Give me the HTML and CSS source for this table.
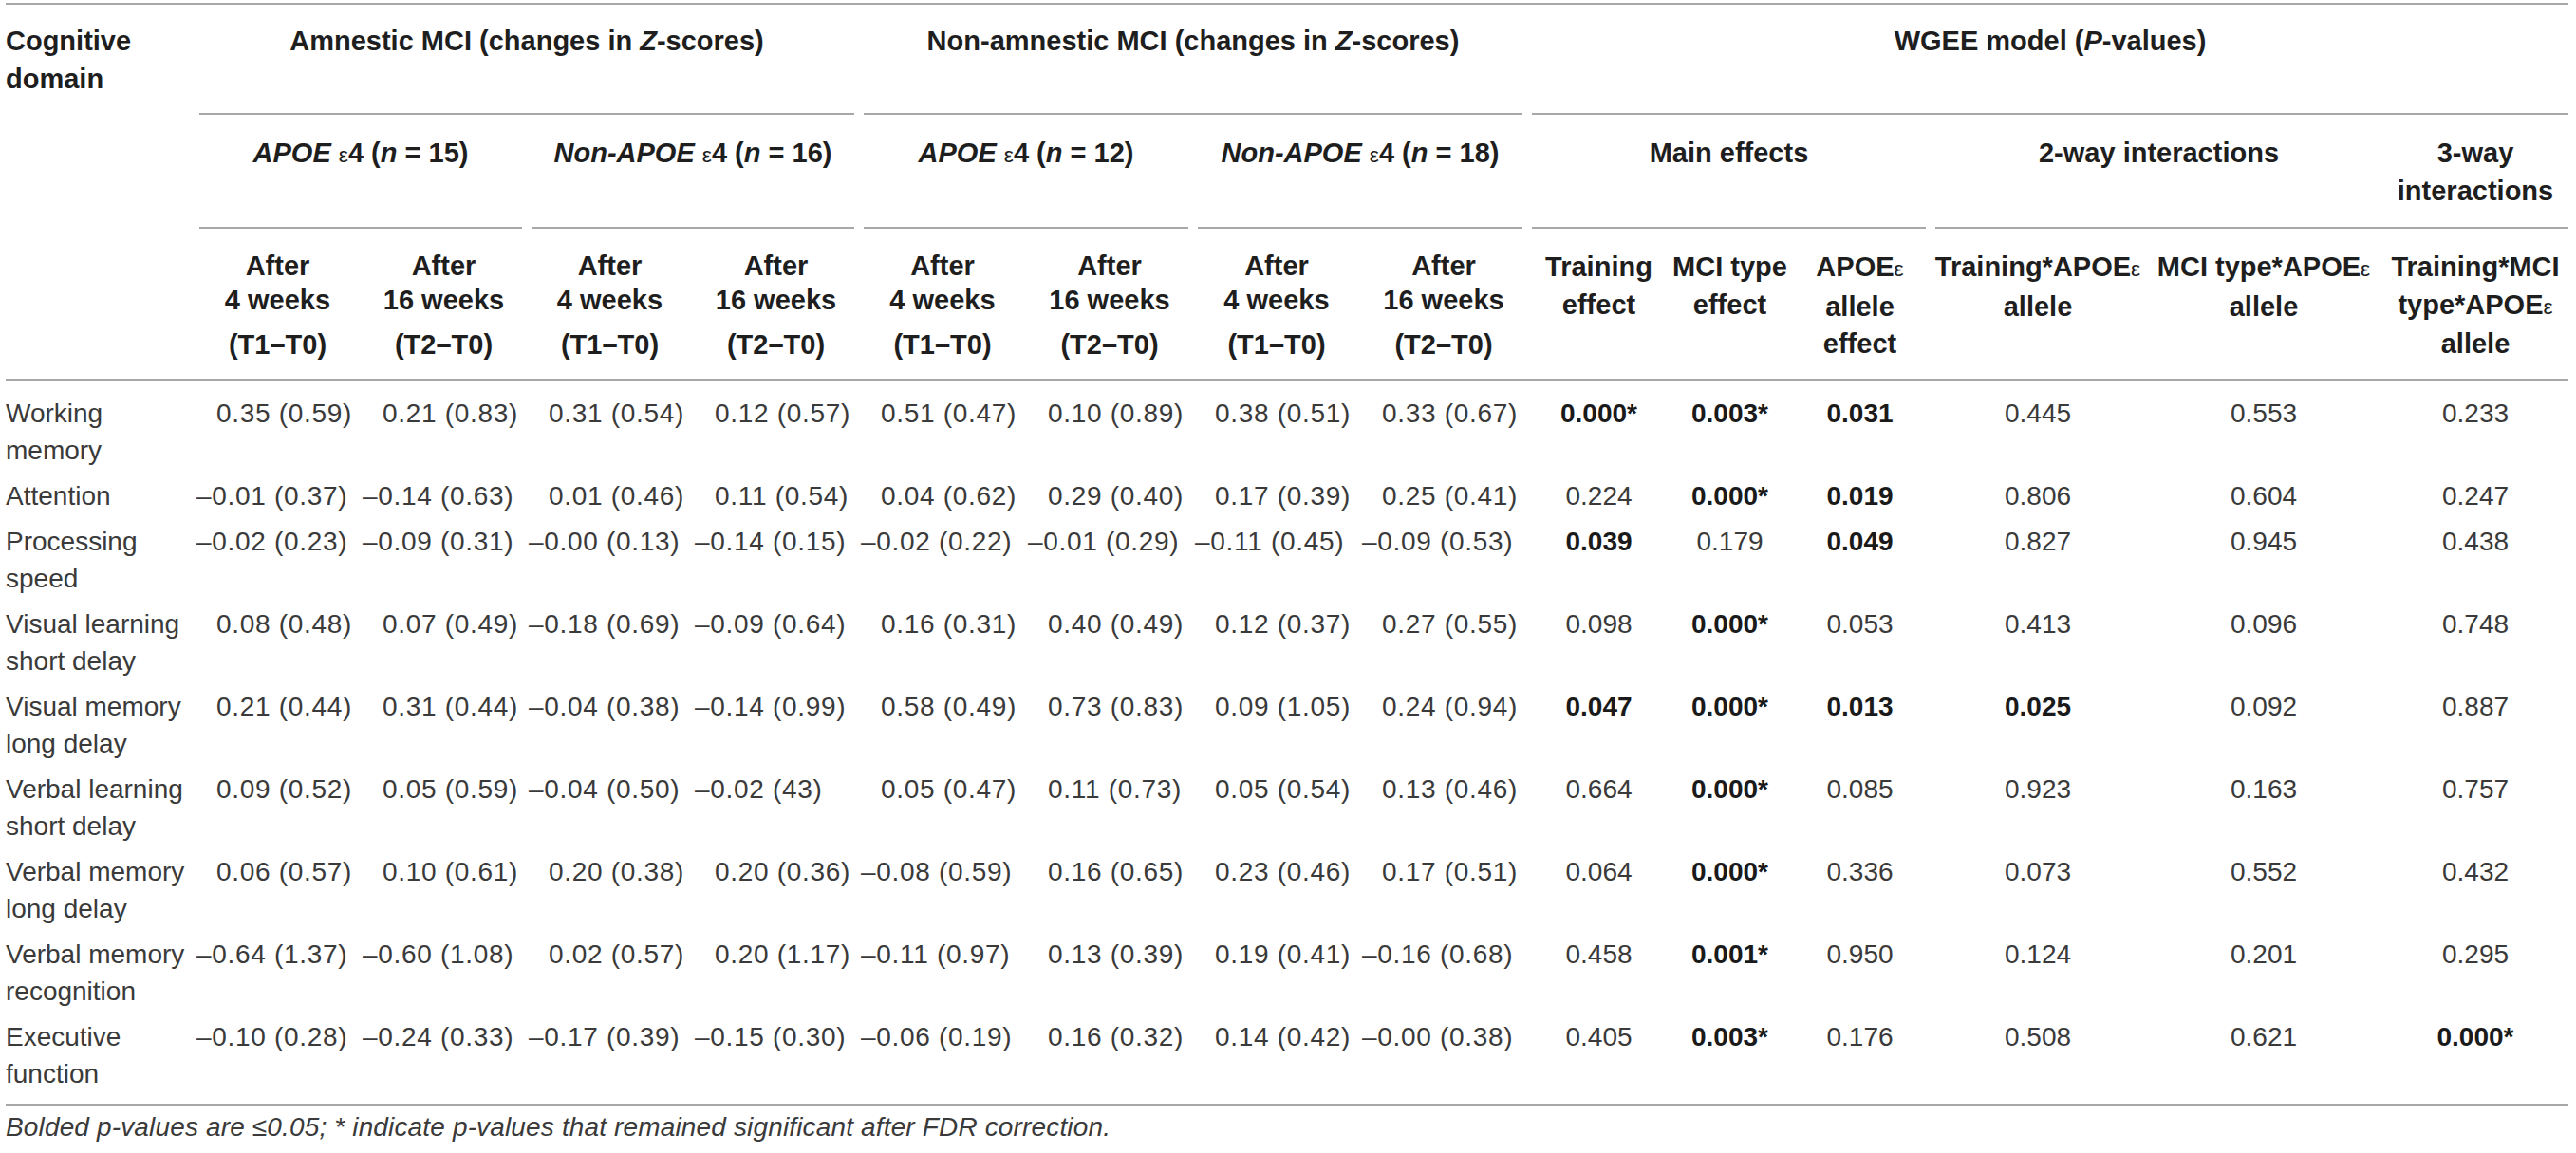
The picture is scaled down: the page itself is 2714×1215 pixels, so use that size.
FILE: index.html
```html
<!DOCTYPE html>
<html lang="en">
<head>
    <meta charset="UTF-8">
    <title>Cognitive domain changes by MCI type and APOE ε4</title>
    <link rel="stylesheet" href="styles.css">
</head>
<body>
    <div class="table">
        <!-- header row 1 -->
        <div class="hrow r1">
            <div class="th left">Cognitive<br>domain</div>
            <div class="th group span4">Amnestic MCI (changes in <i>Z</i>-scores)</div>
            <div class="th group span4">Non-amnestic MCI (changes in <i>Z</i>-scores)</div>
            <div class="th group span6 end">WGEE model (<i>P</i>-values)</div>
        </div>
        <!-- header row 2 -->
        <div class="hrow r2">
            <div class="th"></div>
            <div class="th group span2"><i>APOE</i> <span class="eps">ε</span>4 (<i>n</i> = 15)</div>
            <div class="th group span2"><i>Non-APOE</i> <span class="eps">ε</span>4 (<i>n</i> = 16)</div>
            <div class="th group span2"><i>APOE</i> <span class="eps">ε</span>4 (<i>n</i> = 12)</div>
            <div class="th group span2"><i>Non-APOE</i> <span class="eps">ε</span>4 (<i>n</i> = 18)</div>
            <div class="th group span3">Main effects</div>
            <div class="th group span2 end">2-way interactions</div>
            <div class="th group flush">3-way<br>interactions</div>
        </div>
        <!-- header row 3 -->
        <div class="hrow r3">
            <div class="th"></div>
            <div class="th"><div class="wk">After<br>4 weeks</div><div class="tt">(T1–T0)</div></div>
            <div class="th"><div class="wk">After<br>16 weeks</div><div class="tt">(T2–T0)</div></div>
            <div class="th"><div class="wk">After<br>4 weeks</div><div class="tt">(T1–T0)</div></div>
            <div class="th"><div class="wk">After<br>16 weeks</div><div class="tt">(T2–T0)</div></div>
            <div class="th"><div class="wk">After<br>4 weeks</div><div class="tt">(T1–T0)</div></div>
            <div class="th"><div class="wk">After<br>16 weeks</div><div class="tt">(T2–T0)</div></div>
            <div class="th"><div class="wk">After<br>4 weeks</div><div class="tt">(T1–T0)</div></div>
            <div class="th"><div class="wk">After<br>16 weeks</div><div class="tt">(T2–T0)</div></div>
            <div class="th">Training<br>effect</div>
            <div class="th">MCI type<br>effect</div>
            <div class="th">APOE<span class="eps">ε</span><br>allele<br>effect</div>
            <div class="th">Training*APOE<span class="eps">ε</span><br>allele</div>
            <div class="th">MCI type*APOE<span class="eps">ε</span><br>allele</div>
            <div class="th">Training*MCI<br>type*APOE<span class="eps">ε</span><br>allele</div>
        </div>

        <div class="row first">
            <div class="name">Working<br>memory</div>
            <div class="z pos">0.35 (0.59)</div>
            <div class="z pos">0.21 (0.83)</div>
            <div class="z pos">0.31 (0.54)</div>
            <div class="z pos">0.12 (0.57)</div>
            <div class="z pos">0.51 (0.47)</div>
            <div class="z pos">0.10 (0.89)</div>
            <div class="z pos">0.38 (0.51)</div>
            <div class="z pos">0.33 (0.67)</div>
            <div class="p"><b>0.000*</b></div>
            <div class="p"><b>0.003*</b></div>
            <div class="p"><b>0.031</b></div>
            <div class="p">0.445</div>
            <div class="p">0.553</div>
            <div class="p">0.233</div>
        </div>
        <div class="row">
            <div class="name">Attention</div>
            <div class="z">–0.01 (0.37)</div>
            <div class="z">–0.14 (0.63)</div>
            <div class="z pos">0.01 (0.46)</div>
            <div class="z pos">0.11 (0.54)</div>
            <div class="z pos">0.04 (0.62)</div>
            <div class="z pos">0.29 (0.40)</div>
            <div class="z pos">0.17 (0.39)</div>
            <div class="z pos">0.25 (0.41)</div>
            <div class="p">0.224</div>
            <div class="p"><b>0.000*</b></div>
            <div class="p"><b>0.019</b></div>
            <div class="p">0.806</div>
            <div class="p">0.604</div>
            <div class="p">0.247</div>
        </div>
        <div class="row">
            <div class="name">Processing<br>speed</div>
            <div class="z">–0.02 (0.23)</div>
            <div class="z">–0.09 (0.31)</div>
            <div class="z">–0.00 (0.13)</div>
            <div class="z">–0.14 (0.15)</div>
            <div class="z">–0.02 (0.22)</div>
            <div class="z">–0.01 (0.29)</div>
            <div class="z">–0.11 (0.45)</div>
            <div class="z">–0.09 (0.53)</div>
            <div class="p"><b>0.039</b></div>
            <div class="p">0.179</div>
            <div class="p"><b>0.049</b></div>
            <div class="p">0.827</div>
            <div class="p">0.945</div>
            <div class="p">0.438</div>
        </div>
        <div class="row">
            <div class="name">Visual learning<br>short delay</div>
            <div class="z pos">0.08 (0.48)</div>
            <div class="z pos">0.07 (0.49)</div>
            <div class="z">–0.18 (0.69)</div>
            <div class="z">–0.09 (0.64)</div>
            <div class="z pos">0.16 (0.31)</div>
            <div class="z pos">0.40 (0.49)</div>
            <div class="z pos">0.12 (0.37)</div>
            <div class="z pos">0.27 (0.55)</div>
            <div class="p">0.098</div>
            <div class="p"><b>0.000*</b></div>
            <div class="p">0.053</div>
            <div class="p">0.413</div>
            <div class="p">0.096</div>
            <div class="p">0.748</div>
        </div>
        <div class="row">
            <div class="name">Visual memory<br>long delay</div>
            <div class="z pos">0.21 (0.44)</div>
            <div class="z pos">0.31 (0.44)</div>
            <div class="z">–0.04 (0.38)</div>
            <div class="z">–0.14 (0.99)</div>
            <div class="z pos">0.58 (0.49)</div>
            <div class="z pos">0.73 (0.83)</div>
            <div class="z pos">0.09 (1.05)</div>
            <div class="z pos">0.24 (0.94)</div>
            <div class="p"><b>0.047</b></div>
            <div class="p"><b>0.000*</b></div>
            <div class="p"><b>0.013</b></div>
            <div class="p"><b>0.025</b></div>
            <div class="p">0.092</div>
            <div class="p">0.887</div>
        </div>
        <div class="row">
            <div class="name">Verbal learning<br>short delay</div>
            <div class="z pos">0.09 (0.52)</div>
            <div class="z pos">0.05 (0.59)</div>
            <div class="z">–0.04 (0.50)</div>
            <div class="z">–0.02 (43)</div>
            <div class="z pos">0.05 (0.47)</div>
            <div class="z pos">0.11 (0.73)</div>
            <div class="z pos">0.05 (0.54)</div>
            <div class="z pos">0.13 (0.46)</div>
            <div class="p">0.664</div>
            <div class="p"><b>0.000*</b></div>
            <div class="p">0.085</div>
            <div class="p">0.923</div>
            <div class="p">0.163</div>
            <div class="p">0.757</div>
        </div>
        <div class="row">
            <div class="name">Verbal memory<br>long delay</div>
            <div class="z pos">0.06 (0.57)</div>
            <div class="z pos">0.10 (0.61)</div>
            <div class="z pos">0.20 (0.38)</div>
            <div class="z pos">0.20 (0.36)</div>
            <div class="z">–0.08 (0.59)</div>
            <div class="z pos">0.16 (0.65)</div>
            <div class="z pos">0.23 (0.46)</div>
            <div class="z pos">0.17 (0.51)</div>
            <div class="p">0.064</div>
            <div class="p"><b>0.000*</b></div>
            <div class="p">0.336</div>
            <div class="p">0.073</div>
            <div class="p">0.552</div>
            <div class="p">0.432</div>
        </div>
        <div class="row">
            <div class="name">Verbal memory<br>recognition</div>
            <div class="z">–0.64 (1.37)</div>
            <div class="z">–0.60 (1.08)</div>
            <div class="z pos">0.02 (0.57)</div>
            <div class="z pos">0.20 (1.17)</div>
            <div class="z">–0.11 (0.97)</div>
            <div class="z pos">0.13 (0.39)</div>
            <div class="z pos">0.19 (0.41)</div>
            <div class="z">–0.16 (0.68)</div>
            <div class="p">0.458</div>
            <div class="p"><b>0.001*</b></div>
            <div class="p">0.950</div>
            <div class="p">0.124</div>
            <div class="p">0.201</div>
            <div class="p">0.295</div>
        </div>
        <div class="row last">
            <div class="name">Executive<br>function</div>
            <div class="z">–0.10 (0.28)</div>
            <div class="z">–0.24 (0.33)</div>
            <div class="z">–0.17 (0.39)</div>
            <div class="z">–0.15 (0.30)</div>
            <div class="z">–0.06 (0.19)</div>
            <div class="z pos">0.16 (0.32)</div>
            <div class="z pos">0.14 (0.42)</div>
            <div class="z">–0.00 (0.38)</div>
            <div class="p">0.405</div>
            <div class="p"><b>0.003*</b></div>
            <div class="p">0.176</div>
            <div class="p">0.508</div>
            <div class="p">0.621</div>
            <div class="p"><b>0.000*</b></div>
        </div>
    </div>

    <p class="note">Bolded p-values are ≤0.05; * indicate p-values that remained significant after FDR correction.</p>
</body>
</html>
```

FILE: styles.css
```css
* {
    margin: 0;
    padding: 0;
    box-sizing: border-box;
}
body {
    background: white;
    font-family: "Liberation Sans", Arial, sans-serif;
    color: #3a3a3a;
    padding: 3px 0 0 6px;
}
.table {
    width: 2700px;
    display: grid;
    grid-template-columns: 199px repeat(4, 175px) repeat(4, 176px) 151px 125px 149px 226px 250px 196px;
    border-top: 2px solid #a8a8a8;
    border-bottom: 2px solid #a8a8a8;
}
.hrow, .row {
    display: contents;
}

/* header */
.th {
    font-size: 29px;
    font-weight: bold;
    line-height: 39.5px;
    color: #1e1e1e;
    text-align: center;
    white-space: nowrap;
}
.th.left { text-align: left; }
.r1 .th { padding: 19px 0 18px; }
.r2 .th { padding: 21px 0 18px; }
.r3 .th {
    padding: 21px 0 15px;
    border-bottom: 2px solid #a8a8a8;
}
.group {
    margin: 0 5px;
    border-bottom: 2px solid #a8a8a8;
}
.group.end { margin-right: 0; }
.group.flush { margin: 0; }
.span2 { grid-column: span 2; }
.span3 { grid-column: span 3; }
.span4 { grid-column: span 4; }
.span6 { grid-column: span 6; }
.eps {
    font-size: 0.78em;
    font-weight: normal;
    font-style: normal;
}
.wk { line-height: 36px; }
.tt { margin-top: 10px; }

/* body */
.row > div {
    font-size: 28px;
    line-height: 39px;
    padding: 4px 0 5px;
    white-space: nowrap;
}
.row.first > div { padding-top: 15px; }
.row.last > div { padding-bottom: 12px; }
.name { text-align: left; }
.row > .z {
    padding-left: 2px;
    letter-spacing: 0.7px;
}
.row > .z.pos { padding-left: 23px; }
.p { text-align: center; }
.p b { color: #1a1a1a; }

.note {
    margin-top: 5px;
    font-size: 28px;
    letter-spacing: 0.15px;
    line-height: 36px;
    font-style: italic;
    color: #3a3a3a;
}
```
